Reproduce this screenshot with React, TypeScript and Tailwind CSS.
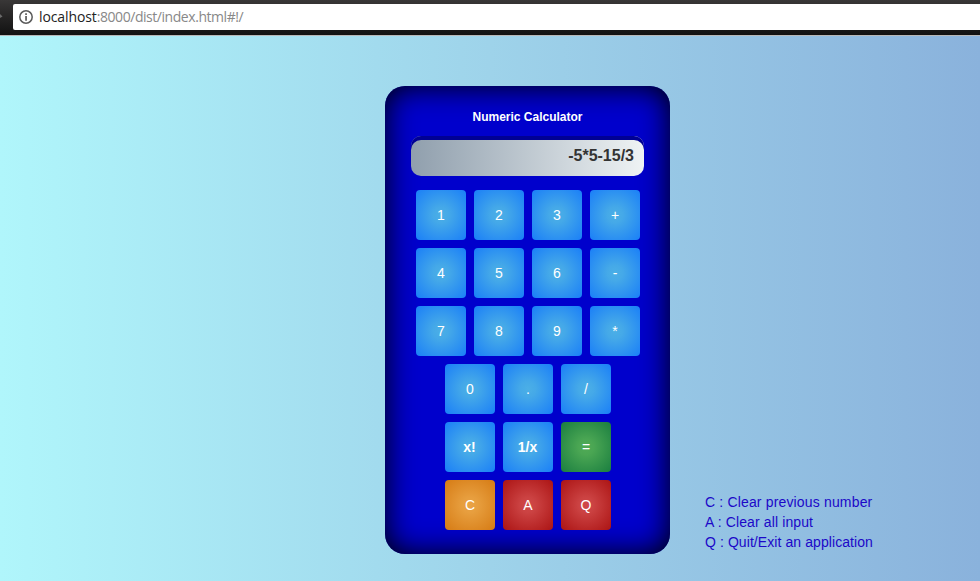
type Tone = 'blue' | 'green' | 'orange' | 'red';

const tones: Record<Tone, string> = {
  blue: 'bg-[radial-gradient(circle,#4bafe6_0%,#45a9e8_22%,#1a7ff8_100%)]',
  green: 'bg-[radial-gradient(circle,#50aa55_0%,#4aa653_22%,#1a7e40_100%)]',
  orange: 'bg-[radial-gradient(circle,#eaa244_0%,#e79e3e_22%,#d67b14_100%)]',
  red: 'bg-[radial-gradient(circle,#d04848_0%,#cb4242_22%,#ac1414_100%)]',
};

type Key = { label: string; tone?: Tone; bold?: boolean };

const rows: Key[][] = [
  [{ label: '1' }, { label: '2' }, { label: '3' }, { label: '+' }],
  [{ label: '4' }, { label: '5' }, { label: '6' }, { label: '-' }],
  [{ label: '7' }, { label: '8' }, { label: '9' }, { label: '*' }],
  [{ label: '0' }, { label: '.' }, { label: '/' }],
  [{ label: 'x!', bold: true }, { label: '1/x', bold: true }, { label: '=', tone: 'green' }],
  [
    { label: 'C', tone: 'orange' },
    { label: 'A', tone: 'red' },
    { label: 'Q', tone: 'red' },
  ],
];

function AddressBar() {
  return (
    <header className="flex h-[36px] items-start border-b border-[#b8b8b8] bg-linear-to-b from-[#393737] to-[#121212] pt-[4px]">
      <svg className="mt-[10px] h-[5px] w-[13px] shrink-0" viewBox="0 0 13 5">
        <path d="M0 0L2.5 2.5L0 4Z" fill="#6a6a6a" />
      </svg>
      <div className="flex h-[26px] flex-1 items-center rounded-l-[2px] bg-white pl-[6px]">
        <svg className="h-[14px] w-[14px]" viewBox="0 0 14 14" fill="none">
          <circle cx="7" cy="7" r="6.2" stroke="#5a5a5a" strokeWidth="1.5" />
          <path d="M6.2 3.3h1.7v1.6H6.2zM6.2 6h1.7v4.7H6.2z" fill="#5a5a5a" />
        </svg>
        <span className="ml-[6px] font-['Open_Sans',sans-serif] text-[14px] leading-[26px] tracking-[-0.45px] text-[#888]">
          <span className="tracking-[-0.1px] text-[#222]">localhost</span>:8000/dist/index.html#!/
        </span>
      </div>
    </header>
  );
}

function CalcKey({ label, tone = 'blue', bold }: Key) {
  return (
    <button
      className={`h-[50px] w-[50px] rounded-[4px] text-center text-[14px] leading-[50px] text-white ${
        bold ? 'font-bold' : 'pl-px'
      } ${tones[tone]}`}
    >
      {label}
    </button>
  );
}

export default function App() {
  return (
    <div className="h-[581px] w-[980px] overflow-hidden font-['Liberation_Sans',Arial,sans-serif]">
      <AddressBar />
      <main className="flex h-[545px] items-start bg-linear-to-r from-[#b0f6fb] via-[#9ed3ea] to-[#8ab2dc] pt-[50px] pl-[385px]">
        <section className="h-[468px] w-[285px] shrink-0 rounded-[20px] bg-[#0000cc] px-[26px] pt-[22px] shadow-[inset_0_0_30px_#000]">
          <h1 className="text-center text-[12px] leading-[18px] font-bold text-white">Numeric Calculator</h1>
          <div className="mt-[10px] h-[40px] rounded-[10px] bg-linear-to-r from-[#909fad] to-[#eff3f4] pr-[10px] text-right text-[16px] leading-[40px] font-bold text-[#333] shadow-[inset_0_4px_0_#000094]">
            -5*5-15/3
          </div>
          <div className="mt-[14px] flex flex-col gap-2">
            {rows.map((row, i) => (
              <div key={i} className="flex justify-center gap-2">
                {row.map((k) => (
                  <CalcKey key={k.label} {...k} />
                ))}
              </div>
            ))}
          </div>
        </section>
        <div className="mt-[406px] ml-[35px] text-[14px] leading-[20px] tracking-[0.12px] whitespace-nowrap text-[#1c08c8]">
          <p className="tracking-[0.16px]">C : Clear previous number</p>
          <p>A : Clear all input</p>
          <p className="tracking-[0.08px]">Q : Quit/Exit an application</p>
        </div>
      </main>
    </div>
  );
}
